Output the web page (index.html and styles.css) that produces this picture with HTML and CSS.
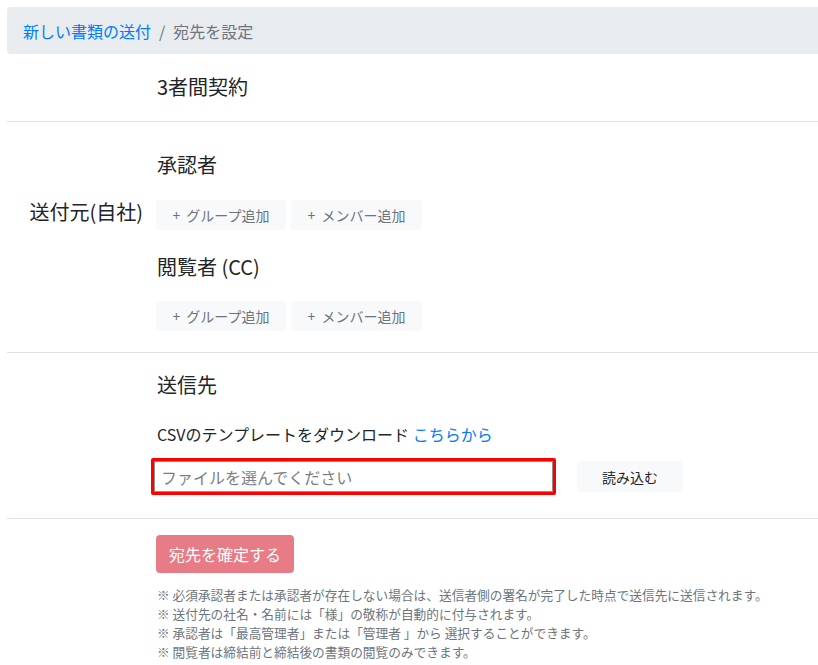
FILE: index.html
```html
<!DOCTYPE html>
<html lang="ja">
<head>
<meta charset="utf-8">
<title>宛先を設定</title>
<link rel="stylesheet" href="styles.css">
</head>
<body>
<div class="page">
  <nav class="breadcrumb">
    <a class="crumb-link" href="#">新しい書類の送付</a>
    <span class="crumb-sep">/</span>
    <span class="crumb-active">宛先を設定</span>
  </nav>

  <section class="row row-title">
    <div class="label-col"></div>
    <div class="content-col">
      <h2 class="heading">3者間契約</h2>
    </div>
  </section>

  <section class="row row-sender">
    <div class="label-col"><span class="side-label">送付元(自社)</span></div>
    <div class="content-col">
      <h2 class="heading">承認者</h2>
      <div class="btn-group">
        <button class="btn-add"><span class="plus">+</span>グループ追加</button>
        <button class="btn-add"><span class="plus">+</span>メンバー追加</button>
      </div>
      <h2 class="heading heading-cc">閲覧者 (CC)</h2>
      <div class="btn-group btn-group-cc">
        <button class="btn-add"><span class="plus">+</span>グループ追加</button>
        <button class="btn-add"><span class="plus">+</span>メンバー追加</button>
      </div>
    </div>
  </section>

  <section class="row row-dest">
    <div class="label-col"></div>
    <div class="content-col">
      <h2 class="heading">送信先</h2>
      <p class="csv-text">CSVのテンプレートをダウンロード <a class="link" href="#">こちらから</a></p>
      <div class="file-row">
        <div class="file-highlight">
          <input class="file-input" type="text" placeholder="ファイルを選んでください">
        </div>
        <button class="btn-load">読み込む</button>
      </div>
    </div>
  </section>

  <section class="row row-submit">
    <div class="label-col"></div>
    <div class="content-col">
      <button class="btn-confirm" disabled>宛先を確定する</button>
      <ul class="notes">
        <li>※ 必須承認者または承認者が存在しない場合は、送信者側の署名が完了した時点で送信先に送信されます。</li>
        <li>※ 送付先の社名・名前には「様」の敬称が自動的に付与されます。</li>
        <li>※ 承認者は「最高管理者」または「管理者 」から 選択することができます。</li>
        <li>※ 閲覧者は締結前と締結後の書類の閲覧のみできます。</li>
      </ul>
    </div>
  </section>
</div>
</body>
</html>
```

FILE: styles.css
```css
html, body {
  margin: 0;
  padding: 0;
  overflow: hidden;
  background: #fff;
}
body {
  font-family: "Noto Sans CJK JP", "Noto Sans", sans-serif;
  color: #212529;
  font-size: 16px;
  line-height: 1.5;
}
.page {
  margin: 7px -40px 0 7px;
}
.breadcrumb {
  display: flex;
  align-items: center;
  background: #e9ecef;
  border-radius: 4px;
  height: 47px;
  padding: 0 16px;
  font-size: 16px;
}
.crumb-link {
  color: #007bff;
  text-decoration: none;
}
.crumb-sep {
  color: #6c757d;
  padding: 0 8px;
}
.crumb-active {
  color: #6c757d;
}
.row {
  display: flex;
  border-bottom: 1px solid #dee2e6;
}
.row-submit {
  border-bottom: none;
}
.label-col {
  width: 150px;
  flex: none;
  box-sizing: border-box;
  padding-right: 14px;
  text-align: right;
}
.content-col {
  flex: 1;
}
.heading {
  margin: 0;
  font-size: 20px;
  font-weight: 400;
  line-height: 30px;
  color: #212529;
}
.row-title .content-col {
  padding: 18px 0 19px;
}
.row-sender .content-col {
  padding: 28px 0 21px;
}
.side-label {
  display: block;
  margin-top: 75px;
  font-size: 20px;
  line-height: 30px;
}
.btn-group {
  display: flex;
  gap: 5px;
  margin: 20px 0 0 -1px;
}
.heading-cc {
  margin-top: 22px;
}
.btn-group-cc {
  margin-top: 19px;
}
.btn-add {
  font-family: inherit;
  font-size: 14px;
  line-height: 20px;
  height: 30px;
  width: 130px;
  padding: 0;
  border: none;
  border-radius: 3px;
  background: #f8f9fa;
  color: #6c757d;
  cursor: pointer;
}
.btn-add:last-child {
  width: 131px;
}
.plus {
  margin-right: 6px;
}
.row-dest .content-col {
  padding: 17px 0 23px;
}
.csv-text {
  margin: 22px 0 0;
  font-size: 16px;
  line-height: 24px;
}
.link {
  color: #007bff;
  text-decoration: none;
}
.file-row {
  display: flex;
  align-items: center;
  gap: 21px;
  margin-top: 12px;
  margin-left: -6px;
}
.file-highlight {
  width: 405px;
  height: 37px;
  box-sizing: border-box;
  border: 3px solid #ff0000;
  border-radius: 2px;
  display: flex;
}
.file-input {
  flex: 1;
  margin: 0;
  box-sizing: border-box;
  height: 31px;
  border: 1px solid #8f8f8f;
  padding: 0 6px;
  font-family: inherit;
  font-size: 16px;
  color: #495057;
  outline: none;
}
.file-input::placeholder {
  color: #7a7f85;
}
.btn-load {
  font-family: inherit;
  font-size: 14px;
  width: 106px;
  height: 31px;
  padding: 0;
  border: none;
  border-radius: 3px;
  background: #f8f9fa;
  color: #212529;
}
.row-submit .content-col {
  padding-top: 16px;
}
.btn-confirm {
  font-family: inherit;
  font-size: 16px;
  line-height: 24px;
  height: 38px;
  padding: 0 13px;
  margin-left: -1px;
  border: none;
  border-radius: 4px;
  background: rgb(232, 124, 134);
  color: #fff;
}
.notes {
  list-style: none;
  margin: 12px 0 0;
  padding: 0;
  font-size: 12.7px;
  line-height: 19px;
  color: #6c757d;
}
```
